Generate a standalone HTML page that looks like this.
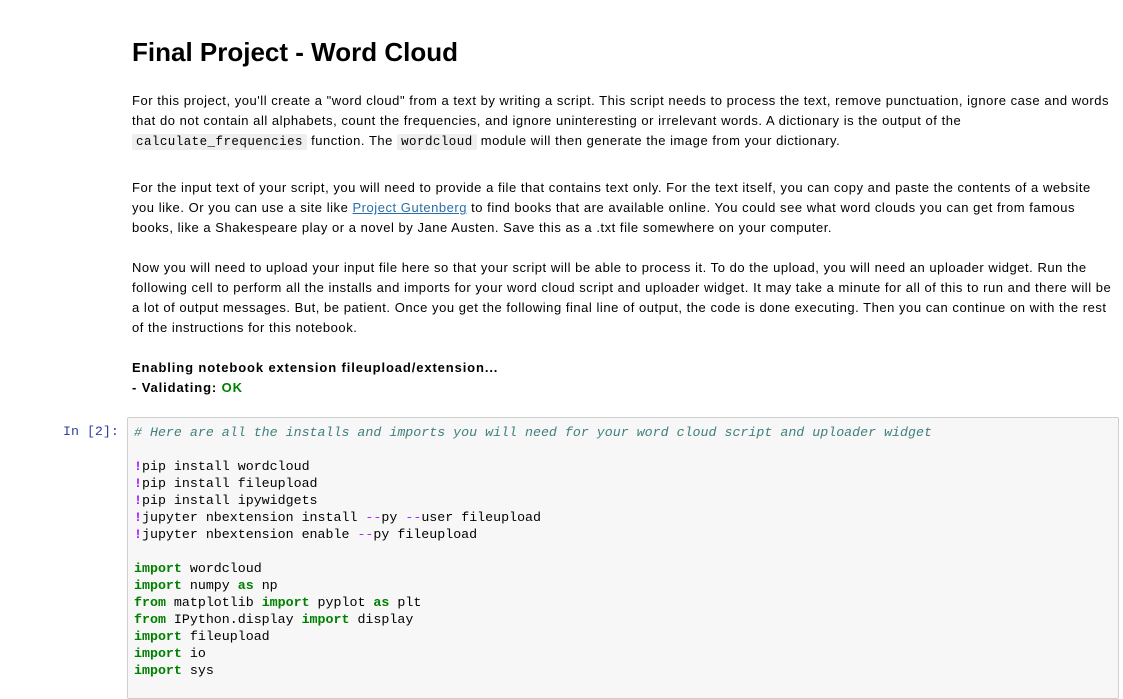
<!DOCTYPE html>
<html><head><style>
body{margin:0;background:#fff;font-family:"Liberation Sans",sans-serif;color:#000;width:1123px;height:684px;overflow:hidden}
.md{position:absolute;left:132px;width:1000px;font-size:13px;line-height:20px;letter-spacing:0.53px}
h1{position:absolute;left:132px;top:36px;margin:0;font-size:26px;font-weight:bold;line-height:32px}
p{margin:0;white-space:nowrap}
code{font-family:"Liberation Mono",monospace;font-size:12.5px;background:#eee;padding:1px 4px;border-radius:2px;letter-spacing:0.45px}
a{color:#296eaa;text-decoration:underline}
.prompt{position:absolute;left:63px;top:424px;font-family:"Liberation Mono",monospace;font-size:13.3px;color:#303f9f}
.cell{position:absolute;left:127px;top:417px;width:990px;height:280px;background:#f7f7f7;border:1px solid #cfcfcf;border-radius:2px}
pre{margin:0;position:absolute;left:6px;top:6px;font-family:"Liberation Mono",monospace;font-size:13.3px;line-height:17px;color:#000}
.c{color:#408080;font-style:italic}.m{color:#aa22ff;font-weight:bold}.k{color:#008000;font-weight:bold}.o{color:#aa22ff}
</style></head><body>
<h1>Final Project - Word Cloud</h1>
<div class="md" style="top:91px"><p>For this project, you'll create a "word cloud" from a text by writing a script. This script needs to process the text, remove punctuation, ignore case and words</p><p>that do not contain all alphabets, count the frequencies, and ignore uninteresting or irrelevant words. A dictionary is the output of the</p><p><code>calculate_frequencies</code> function. The <code>wordcloud</code> module will then generate the image from your dictionary.</p></div>
<div class="md" style="top:178px"><p>For the input text of your script, you will need to provide a file that contains text only. For the text itself, you can copy and paste the contents of a website</p><p>you like. Or you can use a site like <a>Project Gutenberg</a> to find books that are available online. You could see what word clouds you can get from famous</p><p>books, like a Shakespeare play or a novel by Jane Austen. Save this as a .txt file somewhere on your computer.</p></div>
<div class="md" style="top:258px"><p>Now you will need to upload your input file here so that your script will be able to process it. To do the upload, you will need an uploader widget. Run the</p><p>following cell to perform all the installs and imports for your word cloud script and uploader widget. It may take a minute for all of this to run and there will be</p><p>a lot of output messages. But, be patient. Once you get the following final line of output, the code is done executing. Then you can continue on with the rest</p><p>of the instructions for this notebook.</p></div>
<div class="md" style="top:358px;font-weight:bold;letter-spacing:0.88px"><p>Enabling notebook extension fileupload/extension...</p><p>- Validating: <span style="color:#008000">OK</span></p></div>
<div class="prompt">In [2]:</div>
<div class="cell"><pre><span class="c"># Here are all the installs and imports you will need for your word cloud script and uploader widget</span>

<span class="m">!</span>pip install wordcloud
<span class="m">!</span>pip install fileupload
<span class="m">!</span>pip install ipywidgets
<span class="m">!</span>jupyter nbextension install <span class="o">--</span>py <span class="o">--</span>user fileupload
<span class="m">!</span>jupyter nbextension enable <span class="o">--</span>py fileupload

<span class="k">import</span> wordcloud
<span class="k">import</span> numpy <span class="k">as</span> np
<span class="k">from</span> matplotlib <span class="k">import</span> pyplot <span class="k">as</span> plt
<span class="k">from</span> IPython.display <span class="k">import</span> display
<span class="k">import</span> fileupload
<span class="k">import</span> io
<span class="k">import</span> sys</pre></div>
</body></html>
